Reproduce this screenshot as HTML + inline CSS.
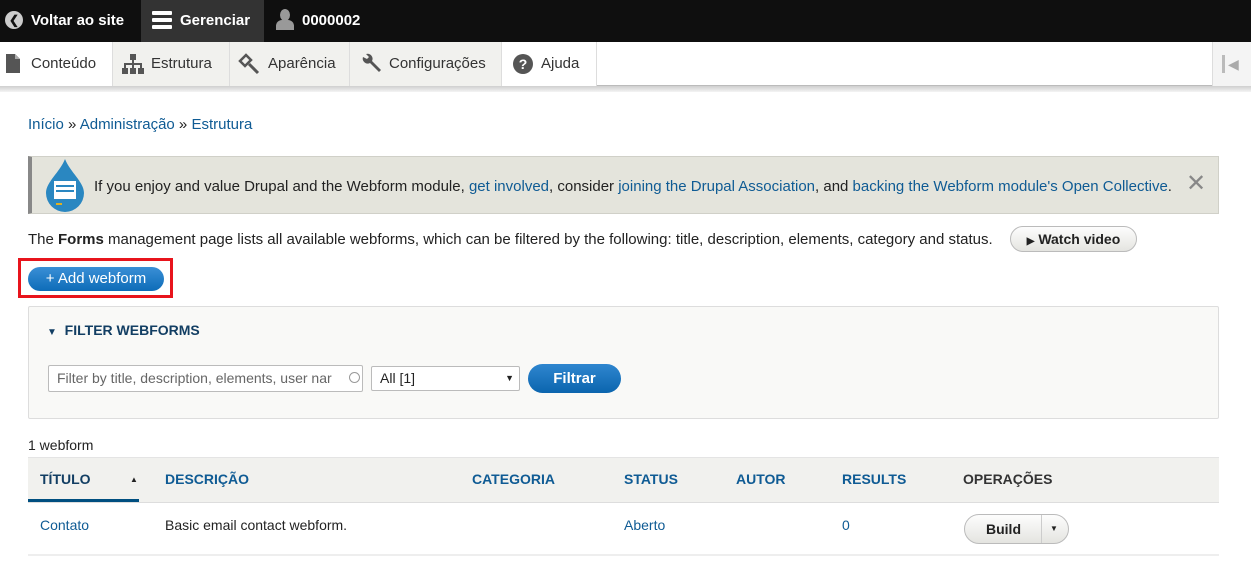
<!DOCTYPE html>
<html><head><meta charset="utf-8"><style>
*{box-sizing:border-box;margin:0;padding:0}
body{width:1251px;height:566px;overflow:hidden;background:#fff;font-family:"Liberation Sans",sans-serif;font-size:15px;color:#222;position:relative}
.abs{position:absolute}
a{color:#0f5b94;text-decoration:none}
.top{left:0;top:0;width:1251px;height:42px;background:#0f0f0f;color:#fff;font-weight:bold;font-size:15px}
.tray{left:0;top:42px;width:1251px;height:44px;background:#fff;border-bottom:1px solid #bbb;font-size:15px;color:#333}
.tray div.it{position:absolute;top:0;height:44px;line-height:44px;border-right:1px solid #ddd}
.shadow{left:0;top:86px;width:1251px;height:6px;background:linear-gradient(#cfcfcf,#f4f4f4)}
.btn{border-radius:14px;text-align:center}
</style></head><body>
<div class="abs top">
  <div class="abs" style="left:5px;top:11px;width:18px;height:18px;border-radius:50%;background:#ccc"></div>
  <div class="abs" style="left:9px;top:14px;color:#111;font-size:12px;line-height:12px">&#10094;</div>
  <div class="abs" style="left:31px;top:12px">Voltar ao site</div>
  <div class="abs" style="left:141px;top:0;width:123px;height:42px;background:#333"></div>
  <div class="abs" style="left:152px;top:11px;width:20px;height:4px;background:#fff;border-radius:1px"></div>
  <div class="abs" style="left:152px;top:18px;width:20px;height:4px;background:#fff;border-radius:1px"></div>
  <div class="abs" style="left:152px;top:25px;width:20px;height:4px;background:#fff;border-radius:1px"></div>
  <div class="abs" style="left:180px;top:12px">Gerenciar</div>
  <div class="abs" style="left:280px;top:9px;width:10px;height:12px;border-radius:50%;background:#999"></div>
  <div class="abs" style="left:276px;top:20px;width:18px;height:10px;border-radius:6px 6px 0 0;background:#999"></div>
  <div class="abs" style="left:302px;top:12px">0000002</div>
</div>
<div class="abs tray">
  <div class="it" style="left:0;width:113px;padding-left:31px;background:#fff">Conteúdo</div>
  <div class="it" style="left:113px;width:117px;padding-left:38px;background:#f1f1ee">Estrutura</div>
  <div class="it" style="left:230px;width:120px;padding-left:38px;background:#f1f1ee">Aparência</div>
  <div class="it" style="left:350px;width:152px;padding-left:39px;background:#f1f1ee">Configurações</div>
  <div class="it" style="left:502px;width:95px;padding-left:39px;background:#fff">Ajuda</div>
  <div class="it" style="left:1212px;width:39px;background:#f4f4f4;border-left:1px solid #ddd;border-right:0"></div>
  <svg class="abs" style="left:6px;top:12px" width="14" height="19"><path d="M0 0h9l5 5v14H0z" fill="#555"/><path d="M9 0v5h5" fill="#aaa"/></svg>
  <svg class="abs" style="left:122px;top:12px" width="22" height="20" fill="#555"><rect x="8" y="0" width="6" height="6"/><rect x="10" y="6" width="2" height="4"/><rect x="2" y="9" width="18" height="2"/><rect x="2" y="9" width="2" height="5"/><rect x="10" y="9" width="2" height="5"/><rect x="18" y="9" width="2" height="5"/><rect x="0" y="14" width="6" height="6"/><rect x="8" y="14" width="6" height="6"/><rect x="16" y="14" width="6" height="6"/></svg>
  <svg class="abs" style="left:238px;top:11px" width="22" height="22"><path d="M2 8l6-6 5 5-6 6z" fill="none" stroke="#555" stroke-width="2.5"/><path d="M11 11l9 9" stroke="#555" stroke-width="3"/></svg>
  <svg class="abs" style="left:360px;top:11px" width="22" height="22"><path d="M3 4a5 5 0 0 0 7 6l9 9 2-2-9-9a5 5 0 0 0-6-7l3 3-2 2z" fill="#555"/></svg>
  <div class="abs" style="left:513px;top:12px;width:20px;height:20px;border-radius:50%;background:#555;color:#fff;font-weight:bold;font-size:14px;text-align:center;line-height:20px">?</div>
  <div class="abs" style="left:1222px;top:13px;width:3px;height:18px;background:#bbb"></div>
  <div class="abs" style="left:1228px;top:14px;color:#aaa;font-size:14px">&#9664;</div>
</div>
<div class="abs shadow"></div>
<div class="abs" style="left:28px;top:116px"><a>Início</a> » <a>Administração</a> » <a>Estrutura</a></div>

<div class="abs" style="left:28px;top:156px;width:1191px;height:58px;background:#e4e4dc;border:1px solid #d0d0c8;border-left:4px solid #888"></div>
<svg class="abs" style="left:44px;top:158px" width="42" height="54"><path d="M21 1C16 14 2 24 2 35a19 19 0 0 0 38 0C40 24 26 14 21 1z" fill="#2a87c1"/><rect x="10" y="23" width="22" height="18" fill="#fff"/><rect x="12" y="27" width="18" height="2" fill="#2a87c1"/><rect x="12" y="32" width="18" height="2" fill="#2a87c1"/><rect x="12" y="45" width="6" height="2" fill="#e0b020"/></svg>
<div class="abs" style="left:94px;top:178px;white-space:nowrap">If you enjoy and value Drupal and the Webform module, <a>get involved</a>, consider <a>joining the Drupal Association</a>, and <a>backing the Webform module's Open Collective</a>.</div>
<div class="abs" style="left:1186px;top:170px;font-size:24px;color:#888;line-height:28px">&#10005;</div>

<div class="abs" style="left:28px;top:231px;white-space:nowrap">The <b>Forms</b> management page lists all available webforms, which can be filtered by the following: title, description, elements, category and status.</div>
<div class="abs btn" style="left:1010px;top:226px;width:127px;height:26px;border:1px solid #bbb;background:linear-gradient(#fdfdfd,#e4e4e0);line-height:24px;font-weight:bold;font-size:14px"><span style="font-size:10px">&#9654;</span> Watch video</div>

<div class="abs" style="left:18px;top:258px;width:155px;height:40px;border:3px solid #e8141c"></div>
<div class="abs btn" style="left:28px;top:267px;width:136px;height:24px;background:linear-gradient(#3a8fd6,#0d6cb8);color:#fff;line-height:24px;font-size:15px">+ Add webform</div>

<div class="abs" style="left:28px;top:306px;width:1191px;height:113px;background:#f9f9f7;border:1px solid #ddd;border-radius:2px"></div>
<div class="abs" style="left:47px;top:322px;font-weight:bold;color:#123e63;font-size:14px"><span style="font-size:10px">&#9660;</span>&nbsp; FILTER WEBFORMS</div>
<div class="abs" style="left:48px;top:365px;width:315px;height:27px;background:#fff;border:1px solid #bbb;border-radius:2px;color:#666;padding-left:8px;line-height:25px;white-space:nowrap;overflow:hidden;font-size:14px">Filter by title, description, elements, user nar</div>
<div class="abs" style="left:349px;top:372px;width:11px;height:11px;border:1px solid #999;border-radius:50%;background:#fff"></div>
<div class="abs" style="left:371px;top:366px;width:149px;height:25px;background:#fff;border:1px solid #bbb;border-radius:2px;padding-left:8px;line-height:23px;font-size:14px">All [1]<span style="position:absolute;right:5px;font-size:9px">&#9660;</span></div>
<div class="abs btn" style="left:528px;top:364px;width:93px;height:29px;background:linear-gradient(#2f86cf,#0b65ae);color:#fff;line-height:29px;font-weight:bold;font-size:15px;border-radius:15px">Filtrar</div>

<div class="abs" style="left:28px;top:437px;font-size:14px">1 webform</div>
<div class="abs" style="left:28px;top:457px;width:1191px;height:46px;background:#f1f1ee;border-top:1px solid #e4e4e4;border-bottom:1px solid #ddd"></div>
<div class="abs" style="left:28px;top:499px;width:111px;height:3px;background:#004f80"></div>
<div class="abs" style="top:471px;left:0;font-weight:bold;font-size:14px;width:1251px">
 <span class="abs" style="left:40px;color:#123e63">TÍTULO</span>
 <span class="abs" style="left:130px;font-size:8px;top:4px">&#9650;</span>
 <span class="abs" style="left:165px;color:#0f5b94">DESCRIÇÃO</span>
 <span class="abs" style="left:472px;color:#0f5b94">CATEGORIA</span>
 <span class="abs" style="left:624px;color:#0f5b94">STATUS</span>
 <span class="abs" style="left:736px;color:#0f5b94">AUTOR</span>
 <span class="abs" style="left:842px;color:#0f5b94">RESULTS</span>
 <span class="abs" style="left:963px;color:#333">OPERAÇÕES</span>
</div>
<div class="abs" style="left:28px;top:554px;width:1191px;height:2px;background:#eee"></div>
<div class="abs" style="top:517px;left:0;width:1251px;font-size:14px">
 <a class="abs" style="left:40px">Contato</a>
 <span class="abs" style="left:165px">Basic email contact webform.</span>
 <a class="abs" style="left:624px">Aberto</a>
 <a class="abs" style="left:842px">0</a>
</div>
<div class="abs btn" style="left:964px;top:514px;width:105px;height:30px;border:1px solid #bbb;background:linear-gradient(#fdfdfd,#e4e4e0);border-radius:15px"></div>
<div class="abs" style="left:986px;top:521px;font-weight:bold;font-size:14px">Build</div>
<div class="abs" style="left:1041px;top:515px;width:1px;height:28px;background:#ccc"></div>
<div class="abs" style="left:1050px;top:524px;font-size:8px">&#9660;</div>
</body></html>
